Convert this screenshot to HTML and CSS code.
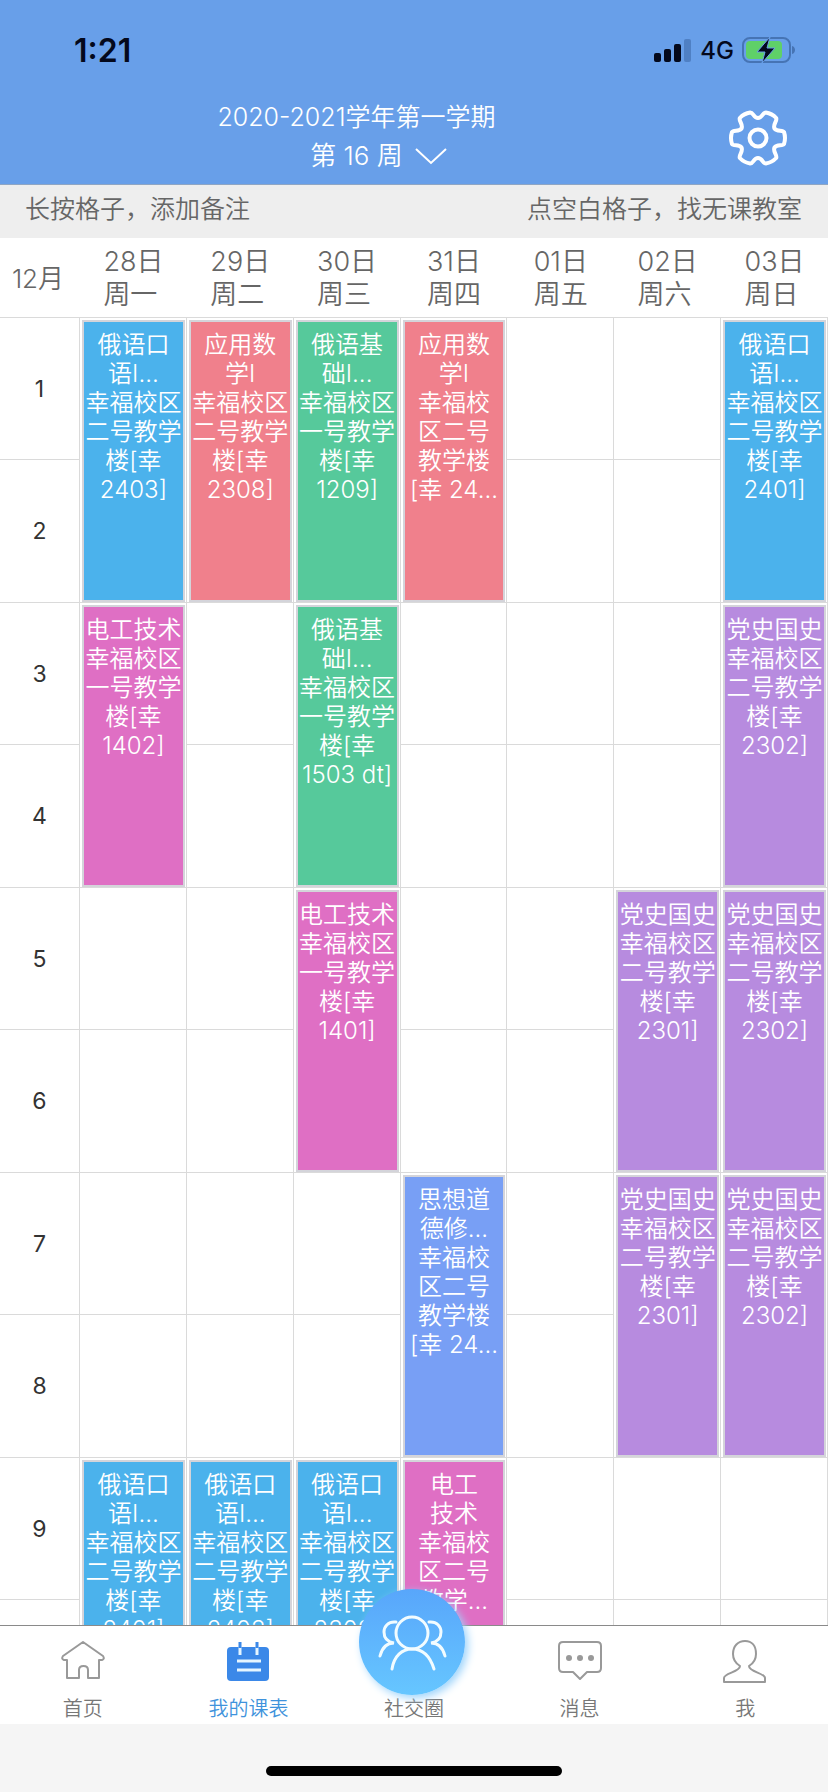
FILE: index.html
```html
<!DOCTYPE html>
<html lang="zh-CN">
<head>
<meta charset="utf-8">
<meta name="viewport" content="width=device-width, initial-scale=1">
<title>我的课表</title>
<link rel="stylesheet" href="styles.css">
</head>
<body>
<div class="app">
  <header class="header">
    <div class="status">
      <span class="status-time">1:21</span>
      <div class="status-right">
        <svg class="signal" viewBox="0 0 38 24" aria-hidden="true">
          <rect x="0" y="15" width="7" height="9" rx="2"/>
          <rect x="10" y="11" width="7" height="13" rx="2"/>
          <rect x="20" y="6" width="7" height="18" rx="2"/>
          <rect class="signal-off" x="30" y="1" width="7" height="23" rx="2"/>
        </svg>
        <span class="status-net">4G</span>
        <svg class="battery" viewBox="0 0 54 28" aria-hidden="true">
          <rect class="battery-case" x="1" y="2" width="47" height="24" rx="7"/>
          <rect class="battery-fill" x="4" y="5" width="36" height="18" rx="4"/>
          <path class="battery-cap" d="M50 10c4 1 4 7 0 8z"/>
          <path class="battery-bolt" d="M28 1 15 16h8l-3 11L33 12h-8z"/>
        </svg>
      </div>
    </div>
    <div class="titlebar">
      <div class="titles">
        <div class="term">2020-2021学年第一学期</div>
        <button class="week" type="button">
          <span class="week-name">第 16 周</span>
          <svg class="chevron" viewBox="0 0 32 18" aria-hidden="true"><path d="M1 2 16 16 31 2"/></svg>
        </button>
      </div>
      <button class="settings" type="button" aria-label="设置">
        <svg class="gear" viewBox="-30 -30 60 60" aria-hidden="true">
          <path d="M26 -6Q28 0 26 6C24.500 8.500 19 6 16.500 9.500C14.500 13.500 19.500 17 18.200 20Q14 24.500 7.800 25.500C4.500 25.500 4.500 20 0 20C-4.500 20 -4.500 25.500 -7.800 25.500Q-14 24.500 -18.200 20C-19.500 17 -14.500 13.500 -16.500 9.500C-19 6 -24.500 8.500 -26 6Q-28 0 -26 -6C-24.500 -8.500 -19 -6 -16.500 -9.500C-14.500 -13.500 -19.500 -17 -18.200 -20Q-14 -24.500 -7.800 -25.500C-4.500 -25.500 -4.500 -20 0 -20C4.500 -20 4.500 -25.500 7.800 -25.500Q14 -24.500 18.200 -20C19.500 -17 14.500 -13.500 16.500 -9.500C19 -6 24.500 -8.500 26 -6Z"/>
          <circle r="8.500"/>
        </svg>
      </button>
    </div>
  </header>

  <div class="hints"><span>长按格子，添加备注</span><span>点空白格子，找无课教室</span></div>

  <main class="scroller">
    <table class="timetable">
      <thead>
        <tr>
          <th class="month" scope="col">12月</th>
          <th scope="col"><span class="day">28日<br>周一</span></th>
          <th scope="col"><span class="day">29日<br>周二</span></th>
          <th scope="col"><span class="day">30日<br>周三</span></th>
          <th scope="col"><span class="day">31日<br>周四</span></th>
          <th scope="col"><span class="day">01日<br>周五</span></th>
          <th scope="col"><span class="day">02日<br>周六</span></th>
          <th scope="col"><span class="day">03日<br>周日</span></th>
        </tr>
      </thead>
      <tbody>
        <tr>
          <th scope="row">1</th>
          <td rowspan="2"><div class="course sky">俄语口<br>语I...<br>幸福校区<br>二号教学<br>楼[幸<br>2403]</div></td>
          <td rowspan="2"><div class="course coral">应用数<br>学I<br>幸福校区<br>二号教学<br>楼[幸<br>2308]</div></td>
          <td rowspan="2"><div class="course green">俄语基<br>础I...<br>幸福校区<br>一号教学<br>楼[幸<br>1209]</div></td>
          <td rowspan="2"><div class="course coral">应用数<br>学I<br>幸福校<br>区二号<br>教学楼<br>[幸 24...</div></td>
          <td></td>
          <td></td>
          <td rowspan="2"><div class="course sky">俄语口<br>语I...<br>幸福校区<br>二号教学<br>楼[幸<br>2401]</div></td>
        </tr>
        <tr><th scope="row">2</th><td></td><td></td></tr>
        <tr>
          <th scope="row">3</th>
          <td rowspan="2"><div class="course pink">电工技术<br>幸福校区<br>一号教学<br>楼[幸<br>1402]</div></td>
          <td></td>
          <td rowspan="2"><div class="course green">俄语基<br>础I...<br>幸福校区<br>一号教学<br>楼[幸<br>1503 dt]</div></td>
          <td></td>
          <td></td>
          <td></td>
          <td rowspan="2"><div class="course purple">党史国史<br>幸福校区<br>二号教学<br>楼[幸<br>2302]</div></td>
        </tr>
        <tr><th scope="row">4</th><td></td><td></td><td></td><td></td></tr>
        <tr>
          <th scope="row">5</th>
          <td></td>
          <td></td>
          <td rowspan="2"><div class="course pink">电工技术<br>幸福校区<br>一号教学<br>楼[幸<br>1401]</div></td>
          <td></td>
          <td></td>
          <td rowspan="2"><div class="course purple">党史国史<br>幸福校区<br>二号教学<br>楼[幸<br>2301]</div></td>
          <td rowspan="2"><div class="course purple">党史国史<br>幸福校区<br>二号教学<br>楼[幸<br>2302]</div></td>
        </tr>
        <tr><th scope="row">6</th><td></td><td></td><td></td><td></td></tr>
        <tr>
          <th scope="row">7</th>
          <td></td>
          <td></td>
          <td></td>
          <td rowspan="2"><div class="course blue">思想道<br>德修...<br>幸福校<br>区二号<br>教学楼<br>[幸 24...</div></td>
          <td></td>
          <td rowspan="2"><div class="course purple">党史国史<br>幸福校区<br>二号教学<br>楼[幸<br>2301]</div></td>
          <td rowspan="2"><div class="course purple">党史国史<br>幸福校区<br>二号教学<br>楼[幸<br>2302]</div></td>
        </tr>
        <tr><th scope="row">8</th><td></td><td></td><td></td><td></td></tr>
        <tr>
          <th scope="row">9</th>
          <td rowspan="2"><div class="course sky">俄语口<br>语I...<br>幸福校区<br>二号教学<br>楼[幸<br>2401]</div></td>
          <td rowspan="2"><div class="course sky">俄语口<br>语I...<br>幸福校区<br>二号教学<br>楼[幸<br>2403]</div></td>
          <td rowspan="2"><div class="course sky">俄语口<br>语I...<br>幸福校区<br>二号教学<br>楼[幸<br>2302]</div></td>
          <td rowspan="2"><div class="course pink">电工<br>技术<br>幸福校<br>区二号<br>教学...</div></td>
          <td></td>
          <td></td>
          <td></td>
        </tr>
        <tr><th scope="row">10</th><td></td><td></td><td></td></tr>
      </tbody>
    </table>
  </main>

  <nav class="tabs">
    <a class="tab" href="#home">
      <svg class="tab-icon" viewBox="0 0 44 44" aria-hidden="true"><path d="M22 3 42 17q2 3-1 4h-3v18H27V31q0-4-4.500-4T18 31v8H6V21H3q-3-1-1-4z"/></svg>
      <span>首页</span>
    </a>
    <a class="tab active" href="#timetable" aria-current="page">
      <svg class="tab-icon" viewBox="0 0 44 44" aria-hidden="true">
        <rect class="cal-body" x="1" y="8" width="42" height="34" rx="4"/>
        <path class="cal-mark" d="M11 22h24M11 31h24M14 8v8M31 8v8"/>
        <path class="cal-ring" d="M14 3v6M31 3v6"/>
      </svg>
      <span>我的课表</span>
    </a>
    <a class="tab" href="#social">
      <svg class="bubble" viewBox="0 0 106 106" aria-hidden="true">
        <circle cx="53" cy="44" r="16"/>
        <path d="M33 80C35 67 43 60 53 60S71 67 75 80"/>
        <path d="M37 33C29 32 25 38 25 43C25 50 29 53 35 54C28 54 23 59 21 67"/>
        <path d="M70 33C78 32 82 38 82 43C82 50 78 53 72 54C79 54 84 59 86 67"/>
      </svg>
      <span>社交圈</span>
    </a>
    <a class="tab" href="#messages">
      <svg class="tab-icon" viewBox="0 0 44 44" aria-hidden="true">
        <path d="M5 3H39q4 0 4 4V29q0 4-4 4H29l-7 7-7-7H5q-4 0-4-4V7q0-4 4-4z"/>
        <g class="dots"><circle cx="11" cy="19" r="3"/><circle cx="22" cy="19" r="3"/><circle cx="33" cy="19" r="3"/></g>
      </svg>
      <span>消息</span>
    </a>
    <a class="tab" href="#me">
      <svg class="tab-icon" viewBox="0 0 44 44" aria-hidden="true"><path d="M17 27C12 24 10 19 10 15C10 7 15 2 22 2S33 7 33 15C33 19 31 24 26 27C26 33 42 34 42 39V43H1V39C1 34 17 33 17 27z"/></svg>
      <span>我</span>
    </a>
  </nav>
  <div class="safe-area"><div class="home-bar"></div></div>
</div>
</body>
</html>
```
FILE: styles.css
```css
* { box-sizing: border-box; }

body {
  margin: 0;
  font-family: Inter, "Noto Sans CJK SC", sans-serif;
  font-weight: 350;
  color: #666;
  background: #fff;
}

button {
  margin: 0;
  padding: 0;
  border: 0;
  background: none;
  color: inherit;
  font: inherit;
}

svg { display: block; fill: none; }

.app {
  display: flex;
  flex-direction: column;
  height: 100vh;
  overflow: hidden;
}

/* Header */
.header {
  flex: none;
  background: #689fe9;
  border-bottom: 1px solid #8fa6c4;
  color: #fff;
}

.status {
  display: flex;
  align-items: center;
  justify-content: space-between;
  height: 100px;
  padding: 0 32px 0 74px;
  color: #04091c;
}

.status-time { font-size: 32px; font-weight: 600; }
.status-right { display: flex; align-items: center; gap: 8px; }
.status-net { font-size: 24px; font-weight: 500; }

.signal { width: 38px; height: 24px; fill: #04091c; }
.signal-off { fill: #4f80c4; }
.battery { width: 54px; height: 28px; }
.battery-case { stroke: #4674b4; stroke-width: 2; }
.battery-fill { fill: #5fd068; }
.battery-cap { fill: #4674b4; }
.battery-bolt { fill: #04091c; stroke: #689fe9; stroke-width: 1; }

.titlebar {
  display: flex;
  align-items: flex-start;
  height: 84px;
  padding-right: 25px;
}

.titles { flex: 1; text-align: center; }
.term { font-size: 25px; line-height: 34px; }

.week {
  display: grid;
  grid-template-columns: 1fr auto 1fr;
  align-items: center;
  column-gap: 12px;
  width: 100%;
  font-size: 26px;
  line-height: 44px;
}

.week-name { grid-column: 2; }
.chevron { width: 32px; height: 18px; stroke: #fff; stroke-width: 2; }

.settings {
  display: flex;
  justify-content: center;
  width: 90px;
  padding-top: 8px;
}

.gear { width: 60px; height: 60px; stroke: #fff; stroke-width: 4; stroke-linejoin: round; }

.hints {
  flex: none;
  display: flex;
  align-items: center;
  justify-content: space-between;
  height: 53px;
  padding: 0 26px 10px 25px;
  background: #eee;
  font-size: 25px;
}

/* Timetable */
.scroller { flex: 1; min-height: 0; overflow: hidden; }

.timetable {
  width: 100%;
  table-layout: fixed;
  border-collapse: separate;
  border-spacing: 0;
}

.timetable thead tr { height: 80px; }
.timetable tbody tr { height: 142px; }
.timetable tbody tr:nth-child(even) { height: 143px; }

.timetable th,
.timetable td {
  padding: 0;
  border: solid #dadada;
  border-width: 0 1px 1px 0;
}

.timetable thead th {
  padding-top: 1px;
  border-right: 0;
  font-size: 27px;
  font-weight: 350;
  line-height: 33px;
}

.timetable .month { width: 80px; padding-right: 4px; font-size: 26px; }
.timetable tbody th { font-size: 23px; font-weight: 400; color: #333; }
.timetable td { height: 1px; padding: 2px 1px 0 2px; vertical-align: top; }

.day { display: inline-block; text-align: left; }

.course {
  height: 100%;
  padding-top: 8px;
  overflow: hidden;
  border: 2px solid #d4d4da;
  color: #fff;
  font-size: 24px;
  line-height: 29px;
  text-align: center;
  white-space: nowrap;
}

.sky { background: #4bb2ec; }
.coral { background: #f0808c; }
.green { background: #56c99b; }
.pink { background: #df6fc4; }
.purple { background: #b78bdf; }
.blue { background: #789ff5; }

/* Tab bar */
.tabs {
  flex: none;
  display: grid;
  grid-template-columns: repeat(5, 1fr);
  height: 99px;
  border-top: 1px solid #8a8a8a;
  background: #fff;
}

.tab {
  position: relative;
  display: flex;
  flex-direction: column;
  align-items: center;
  justify-content: flex-end;
  gap: 12px;
  padding-bottom: 1px;
  color: #777;
  font-size: 20px;
  line-height: 28px;
  text-decoration: none;
}

.tab.active { color: #3f93dc; }
.tab-icon { width: 44px; height: 44px; stroke: #999; stroke-width: 2; stroke-linejoin: round; }
.tab .dots { fill: #999; stroke: none; }
.tab .cal-body { fill: #3b88e8; stroke: none; }
.tab .cal-mark { stroke: #e6f6ff; stroke-width: 3; }
.tab .cal-ring { stroke: #3b88e8; stroke-width: 3; }

.bubble {
  position: absolute;
  top: -37px;
  left: 28px;
  width: 106px;
  height: 106px;
  border-radius: 50%;
  background: linear-gradient(#58a6fb, #66c6ff);
  box-shadow: 3px 3px 8px #9ed4fb;
  stroke: #f2fcff;
  stroke-width: 3;
  stroke-linecap: round;
}

.safe-area {
  flex: none;
  display: flex;
  align-items: flex-end;
  justify-content: center;
  height: 68px;
  padding-bottom: 16px;
  background: #f5f5f5;
}

.home-bar { width: 296px; height: 10px; border-radius: 5px; background: #000; }
```
